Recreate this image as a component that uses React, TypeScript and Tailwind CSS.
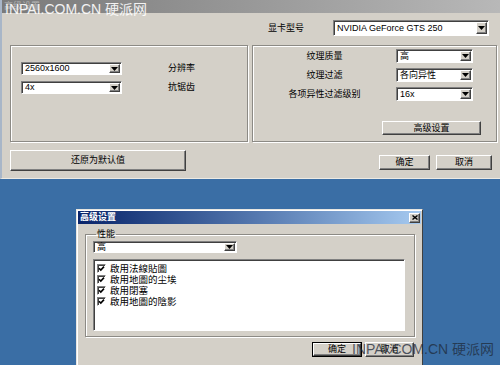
import type { ReactNode } from 'react';

// classic win2k control chrome
const raised =
  'border border-t-white border-l-white border-r-[#404040] border-b-[#404040] shadow-[inset_-1px_-1px_0_#808080]';
const sunken =
  'border border-t-[#808080] border-l-[#808080] border-r-white border-b-white shadow-[inset_1px_1px_0_#404040]';

function Arrow() {
  return (
    <svg width="7" height="4" viewBox="0 0 7 4">
      <path d="M0 0h7L3.5 4z" fill="#000" />
    </svg>
  );
}

function Select({ value, className }: { value: string; className: string }) {
  return (
    <div className={`flex bg-white ${sunken} ${className}`}>
      <span className="flex-1 flex items-center pl-[3px] text-[9px] leading-none text-black whitespace-nowrap overflow-hidden">
        {value}
      </span>
      <span className={`w-[11px] my-[1px] mr-[1px] bg-[#d4d0c8] flex items-center justify-center ${raised}`}>
        <Arrow />
      </span>
    </div>
  );
}

function Btn({ children, className }: { children: ReactNode; className: string }) {
  return (
    <div className={`flex items-center justify-center bg-[#d4d0c8] text-[9px] leading-none text-black ${raised} ${className}`}>
      {children}
    </div>
  );
}

function Check({ label }: { label: string }) {
  return (
    <div className="flex items-center h-[11px] gap-[4px]">
      <span className={`w-[9px] h-[9px] bg-white flex items-center justify-center ${sunken}`}>
        <svg width="7" height="7" viewBox="0 0 7 7">
          <path d="M1 3.2l1.8 1.8L6 1.6" stroke="#000" strokeWidth="1.6" fill="none" />
        </svg>
      </span>
      <span className="text-[9.5px] leading-none text-black">{label}</span>
    </div>
  );
}

const options = ['啟用法線貼圖', '啟用地圖的尘埃', '啟用閉塞', '啟用地圖的陰影'];

export default function App() {
  return (
    <div className="relative w-[500px] h-[365px] overflow-hidden bg-[#3a6ea5] font-['Liberation_Sans','Noto_Sans_CJK_SC',sans-serif]">
      {/* main settings window */}
      <div className="h-[179px] flex flex-col bg-[#d4d0c8] border-l-2 border-l-[#a8b6c8] border-b border-b-[#eceae4]">
        <div className="h-[13px] flex items-center pl-[2px] bg-gradient-to-r from-[#7a7a7a] to-[#b8b8b8] text-[9px] leading-none text-[#b6b6b6]">
          高级设置
        </div>

        <div className="flex items-center h-[16px] mt-[7px]">
          <span className="ml-[266px] w-[65px] text-[9px] leading-none text-black">显卡型号</span>
          <Select value="NVIDIA GeForce GTS 250" className="w-[156px] h-[16px]" />
        </div>

        <div className="flex h-[97px] mt-[9px]">
          <div className="ml-[8px] w-[238px] border border-[#8c8a85] shadow-[inset_1px_1px_0_#fff,1px_1px_0_#fff] flex flex-col gap-[6px] pt-[16px] pl-[10px]">
            <div className="flex items-center">
              <Select value="2560x1600" className="w-[101px] h-[13px]" />
              <span className="ml-[46px] text-[9px] leading-none text-black">分辨率</span>
            </div>
            <div className="flex items-center">
              <Select value="4x" className="w-[101px] h-[13px]" />
              <span className="ml-[46px] text-[9px] leading-none text-black">抗锯齿</span>
            </div>
          </div>

          <div className="ml-[4px] w-[245px] border border-[#8c8a85] shadow-[inset_1px_1px_0_#fff,1px_1px_0_#fff] flex flex-col pt-[3px]">
            <div className="flex flex-col gap-[5px]">
              <div className="flex items-center">
                <span className="w-[143px] text-center text-[9px] leading-none text-black">纹理质量</span>
                <Select value="高" className="w-[77px] h-[14px]" />
              </div>
              <div className="flex items-center">
                <span className="w-[143px] text-center text-[9px] leading-none text-black">纹理过滤</span>
                <Select value="各向异性" className="w-[77px] h-[14px]" />
              </div>
              <div className="flex items-center">
                <span className="w-[143px] text-center text-[9px] leading-none text-black">各项异性过滤级别</span>
                <Select value="16x" className="w-[77px] h-[14px]" />
              </div>
            </div>
            <Btn className="ml-[129px] mt-[20px] w-[99px] h-[14px]">高级设置</Btn>
          </div>
        </div>

        <div className="flex items-end h-[21px] mt-[8px]">
          <Btn className="ml-[8px] w-[176px] h-[21px]">还原为默认值</Btn>
          <Btn className="ml-auto w-[51px] h-[15px] mb-[1px]">确定</Btn>
          <Btn className="ml-[6px] mr-[8px] w-[56px] h-[15px] mb-[1px]">取消</Btn>
        </div>
      </div>

      {/* advanced settings dialog, runs off the bottom edge */}
      <div className="ml-[76px] mt-[30px] w-[347px] h-[190px] flex flex-col bg-[#d4d0c8] border border-t-[#e8e6e0] border-l-[#e8e6e0] border-r-[#404040] border-b-[#404040] shadow-[inset_1px_1px_0_#fff]">
        <div className="mx-[1px] mt-[1px] h-[13px] flex items-center justify-between bg-gradient-to-r from-[#0a246a] to-[#a6caf0] pl-[2px] pr-[1px]">
          <span className="text-[9px] font-bold leading-none text-white">高级设置</span>
          <span className={`w-[11px] h-[10px] bg-[#d4d0c8] flex items-center justify-center ${raised}`}>
            <svg width="6" height="5" viewBox="0 0 6 5">
              <path d="M0.5 0.5l5 4M5.5 0.5l-5 4" stroke="#000" strokeWidth="1.4" />
            </svg>
          </span>
        </div>

        <fieldset className="ml-[8px] mt-[6px] w-[330px] h-[107px] border border-[#8c8a85] shadow-[inset_1px_1px_0_#fff,1px_1px_0_#fff] px-[7px] pb-[4px]">
          <legend className="ml-[3px] px-[1px] text-[9px] leading-none text-black">性能</legend>
          <Select value="高" className="mt-[2px] w-[144px] h-[12px]" />
          <div className={`mt-[6px] w-[312px] h-[72px] bg-white pt-[3px] pl-[3px] flex flex-col font-['Liberation_Sans','Noto_Sans_CJK_TC',sans-serif] ${sunken}`}>
            {options.map(o => (
              <Check key={o} label={o} />
            ))}
          </div>
        </fieldset>

        <div className="flex justify-end mt-[5px] mr-[8px] gap-[3px]">
          <div className="border border-black">
            <Btn className="w-[48px] h-[13px]">确定</Btn>
          </div>
          <Btn className="w-[49px] h-[15px]">取消</Btn>
        </div>
      </div>

      {/* watermarks */}
      <div className="absolute left-[5px] top-[2px] whitespace-nowrap text-[14px] leading-none text-white/90 font-['Liberation_Sans','Noto_Sans_CJK_SC',sans-serif]">
        INPAI.COM.CN 硬派网
      </div>
      <div className="absolute left-[352px] top-[342px] whitespace-nowrap text-[14px] leading-none text-[#1e2a3a]/75 font-['Liberation_Sans','Noto_Sans_CJK_SC',sans-serif]">
        INPAI.COM.CN 硬派网
      </div>
    </div>
  );
}
